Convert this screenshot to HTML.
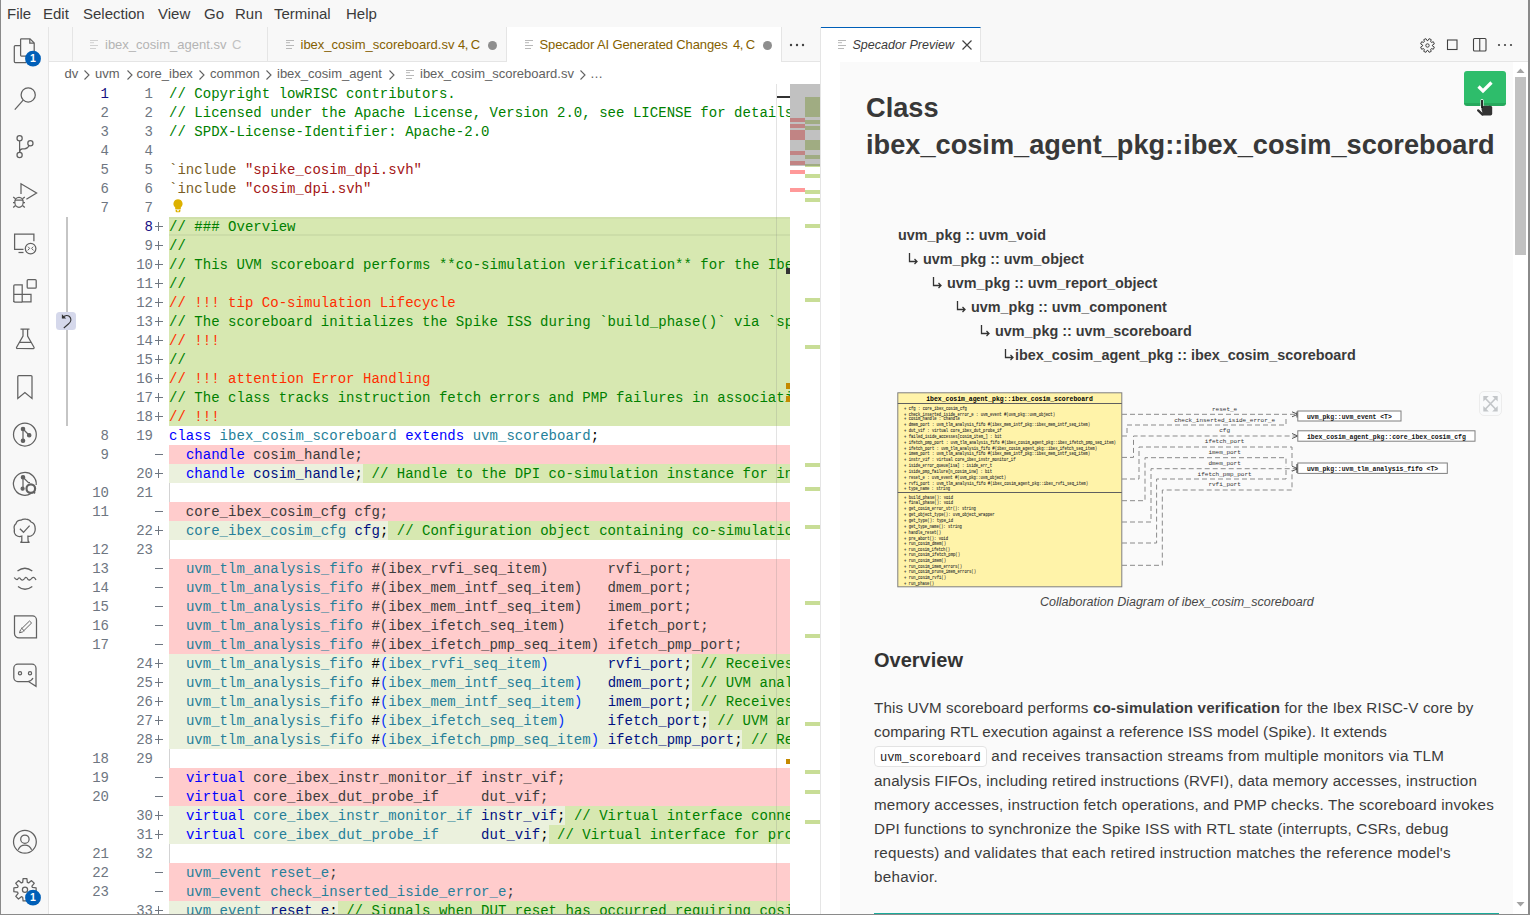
<!DOCTYPE html><html><head><meta charset="utf-8"><title>VS Code</title><style>
*{margin:0;padding:0;box-sizing:border-box}
html,body{width:1530px;height:915px;overflow:hidden;background:#f8f8f8;font-family:"Liberation Sans",sans-serif;position:relative}
.a{position:absolute}
#menubar span{position:absolute;top:5px;font-size:15px;color:#3b3b3b;line-height:18px}
.row{position:absolute;left:169px;width:621px;height:19px;padding-top:1px;font-family:"Liberation Mono",monospace;font-size:14px;line-height:19px;white-space:pre;color:#000;overflow:hidden;letter-spacing:0.033px}
.ln{position:absolute;height:19px;padding-top:1px;font-family:"Liberation Mono",monospace;font-size:14px;line-height:19px;color:#6e7681;text-align:right;white-space:pre}
.c{color:#008000}.r{color:#ff2d00}.k{color:#0000ff}.t{color:#267f99}.v{color:#001080}.s{color:#a31515}.f{color:#795e26}.g{color:#3b3b3b}.b{color:#000}.p{color:#0431fa}
.ins{background:#ebf1dd}.del{background:#ffcccc}.I{background:#d7e8b1}
.tt{font-size:13px;line-height:16px;white-space:nowrap}
.h1{font-weight:bold;font-size:27.2px;line-height:36px;color:#383838;white-space:nowrap}
.inh{font-weight:bold;font-size:14.4px;line-height:20px;color:#3a3a3a;white-space:nowrap}
.cap{font-style:italic;font-size:13px;line-height:18px;color:#474747;white-space:nowrap}
.h2{font-weight:bold;font-size:20px;line-height:28px;color:#333;white-space:nowrap}
.para{font-size:15.2px;line-height:24px;color:#3c3c3c;white-space:nowrap}
.para b{font-weight:bold}
.code{letter-spacing:0;font-family:"Liberation Mono",monospace;font-size:12px;border:1px solid #e3e3e3;border-radius:4px;background:#fff;padding:4px 5px 1px 5px;color:#1a1a1a}
.badge{font-family:'Liberation Sans',sans-serif;font-size:10.5px;font-weight:bold}
.bc{font-size:13px;line-height:16px;white-space:nowrap;color:#616161}
</style></head><body>
<div id="menubar" class="a" style="left:0;top:0;width:1530px;height:27px;background:#f8f8f8">
<span style="left:7px">File</span>
<span style="left:43px">Edit</span>
<span style="left:83px">Selection</span>
<span style="left:158px">View</span>
<span style="left:204px">Go</span>
<span style="left:235px">Run</span>
<span style="left:274px">Terminal</span>
<span style="left:346px">Help</span>
</div>
<div class="a" style="left:0;top:27px;width:48px;height:888px;background:#f8f8f8"></div>
<div class="a" style="left:48px;top:27px;width:1px;height:888px;background:#e5e5e5"></div>
<div class="a" style="left:49px;top:27px;width:771px;height:35px;background:#f8f8f8;border-bottom:1px solid #e5e5e5"></div>
<div class="a" style="left:49px;top:62px;width:771px;height:853px;background:#fff"></div>
<div class="a" style="left:49px;top:27px;width:24px;height:34px;border-right:1px solid #e5e5e5"></div>
<div class="a" style="left:73px;top:27px;width:195px;height:34px;border-right:1px solid #e5e5e5"></div>
<svg class="a" style="left:90px;top:39px" width="10" height="11"><g stroke="#d0d0d0" stroke-width="1"><line x1="0" y1="1.5" x2="8" y2="1.5"/><line x1="0" y1="3.7" x2="4" y2="3.7"/><line x1="0" y1="6.5" x2="8" y2="6.5"/><line x1="0" y1="9.5" x2="6" y2="9.5"/></g></svg>
<div class="a tt" style="left:105px;top:37px;color:#b4b4b4">ibex_cosim_agent.sv</div>
<div class="a tt" style="left:232px;top:37px;color:#c2c2c2">C</div>
<div class="a" style="left:268px;top:27px;width:239px;height:34px;border-right:1px solid #e5e5e5"></div>
<svg class="a" style="left:286px;top:39px" width="10" height="11"><g stroke="#b8b8b8" stroke-width="1"><line x1="0" y1="1.5" x2="8" y2="1.5"/><line x1="0" y1="3.7" x2="4" y2="3.7"/><line x1="0" y1="6.5" x2="8" y2="6.5"/><line x1="0" y1="9.5" x2="6" y2="9.5"/></g></svg>
<div class="a tt" style="left:300.5px;top:37px;color:#855f00">ibex_cosim_scoreboard.sv</div>
<div class="a tt" style="left:458px;top:37px;color:#855f00;letter-spacing:-0.6px">4, C</div>
<div class="a" style="left:487.5px;top:41px;width:9px;height:9px;border-radius:50%;background:#8e8e8e"></div>
<div class="a" style="left:507px;top:27px;width:275px;height:35px;background:#fff;border-right:1px solid #e5e5e5"></div>
<svg class="a" style="left:524.5px;top:39px" width="10" height="11"><g stroke="#b8b8b8" stroke-width="1"><line x1="0" y1="1.5" x2="8" y2="1.5"/><line x1="0" y1="3.7" x2="4" y2="3.7"/><line x1="0" y1="6.5" x2="8" y2="6.5"/><line x1="0" y1="9.5" x2="6" y2="9.5"/></g></svg>
<div class="a tt" style="left:539.5px;top:37px;color:#855f00;letter-spacing:-0.12px">Specador AI Generated Changes</div>
<div class="a tt" style="left:733px;top:37px;color:#855f00;letter-spacing:-0.6px">4, C</div>
<div class="a" style="left:762.5px;top:41px;width:9px;height:9px;border-radius:50%;background:#8e8e8e"></div>
<svg class="a" style="left:788px;top:41px" width="18" height="8"><g fill="#424242"><circle cx="3" cy="4" r="1.2"/><circle cx="9" cy="4" r="1.2"/><circle cx="15" cy="4" r="1.2"/></g></svg>
<div class="a bc" style="left:64.5px;top:66px">dv</div>
<div class="a bc" style="left:95px;top:66px">uvm</div>
<div class="a bc" style="left:136.5px;top:66px">core_ibex</div>
<div class="a bc" style="left:210px;top:66px">common</div>
<div class="a bc" style="left:277px;top:66px">ibex_cosim_agent</div>
<div class="a bc" style="left:420px;top:66px">ibex_cosim_scoreboard.sv</div>
<div class="a bc" style="left:590px;top:66px">…</div>
<svg class="a" style="left:83px;top:68px" width="8" height="14"><path d="M1.5 2.5 L6 7 L1.5 11.5" stroke="#616161" stroke-width="1.1" fill="none"/></svg>
<svg class="a" style="left:125.7px;top:68px" width="8" height="14"><path d="M1.5 2.5 L6 7 L1.5 11.5" stroke="#616161" stroke-width="1.1" fill="none"/></svg>
<svg class="a" style="left:198px;top:68px" width="8" height="14"><path d="M1.5 2.5 L6 7 L1.5 11.5" stroke="#616161" stroke-width="1.1" fill="none"/></svg>
<svg class="a" style="left:265px;top:68px" width="8" height="14"><path d="M1.5 2.5 L6 7 L1.5 11.5" stroke="#616161" stroke-width="1.1" fill="none"/></svg>
<svg class="a" style="left:387.6px;top:68px" width="8" height="14"><path d="M1.5 2.5 L6 7 L1.5 11.5" stroke="#616161" stroke-width="1.1" fill="none"/></svg>
<svg class="a" style="left:578.6px;top:68px" width="8" height="14"><path d="M1.5 2.5 L6 7 L1.5 11.5" stroke="#616161" stroke-width="1.1" fill="none"/></svg>
<svg class="a" style="left:405.5px;top:69px" width="10" height="11"><g stroke="#b8b8b8" stroke-width="1"><line x1="0" y1="1.5" x2="8" y2="1.5"/><line x1="0" y1="3.7" x2="4" y2="3.7"/><line x1="0" y1="6.5" x2="8" y2="6.5"/><line x1="0" y1="9.5" x2="6" y2="9.5"/></g></svg>
<svg class="a" style="left:0;top:0" width="48" height="915"><g fill="none" stroke="#616161" stroke-width="1.25"><path d="M26 45.6 H15.3 a1 1 0 0 0 -1 1 V61.5 a1 1 0 0 0 1 1 H26" />
<path d="M20.6 45.6 V39.6 a0.8 0.8 0 0 1 0.8 -0.8 H30 L34.2 43 V55.2 a0.8 0.8 0 0 1 -0.8 0.8 H21.4 a0.8 0.8 0 0 1 -0.8 -0.8 Z" fill="#f8f8f8"/>
<path d="M29.8 39 V43.2 H34" />
<circle cx="28.2" cy="94.9" r="7.1"/>
<line x1="23.2" y1="100.2" x2="14.8" y2="109.6"/>
<circle cx="19.6" cy="138.3" r="2.6"/><circle cx="19.6" cy="155" r="2.6"/><circle cx="30.4" cy="143.2" r="2.6"/>
<line x1="19.6" y1="140.9" x2="19.6" y2="152.4"/>
<path d="M29.2 145.5 Q27.5 148.8 24.5 148.8 H22.5 Q19.6 149 19.6 152"/>
<path d="M21 194 V183.8 L36.6 193 L26.4 199.3"/>
<ellipse cx="19" cy="202.3" rx="4.2" ry="5"/>
<path d="M14.8 200 H23.2 M13.2 197 L15.5 198.8 M24.8 197 L22.5 198.8 M13 202.5 H15 M23 202.5 H25 M13.2 207.5 L15.5 205.5 M24.8 207.5 L22.5 205.5"/>
<path d="M33.9 241.3 V234.2 H14.6 V249.3 H23.5"/>
<line x1="18.5" y1="252.5" x2="23.5" y2="252.5"/>
<circle cx="30.6" cy="248.6" r="5.3"/>
<path d="M28 246.7 L29.6 248.3 L27.8 250.4 M33.2 246.7 L31.6 248.3 L33.4 250.4" stroke-width="1"/>
<path d="M13.8 302 V285.8 a1 1 0 0 1 1 -1 H22.2 V301.9 H31 V294.4 H13.8"/>
<path d="M22.2 302 H14.8 a1 1 0 0 1 -1 -1" />
<rect x="27.2" y="279.6" width="9" height="8.6" rx="1"/>
<path d="M20.5 329.2 H29.5 M23 329.5 V336 L16.6 347.3 a0.8 0.8 0 0 0 0.7 1.2 H33.3 a0.8 0.8 0 0 0 0.7 -1.2 L27.6 336 V329.5 M19.6 342.3 H31"/>
<path d="M17.8 398.5 V376.5 a1 1 0 0 1 1 -1 H31 a1 1 0 0 1 1 1 V398.5 L24.9 392.6 Z"/>
<circle cx="24.9" cy="434.6" r="11.4"/>
<circle cx="23" cy="429" r="1.7" fill="#616161"/><circle cx="23" cy="440.8" r="1.7" fill="#616161"/><circle cx="29.2" cy="435.2" r="1.7" fill="#616161"/>
<path d="M23 429 V440.8 M23 429 L29.2 435.2"/>
<path d="M31 493.5 A11.4 11.4 0 1 1 36.2 485"/>
<circle cx="23" cy="477.3" r="1.7" fill="#616161"/><circle cx="22.6" cy="488.7" r="1.5" fill="#616161"/>
<path d="M23 477.3 V488 M23 477.3 L28.5 482.6 H30"/>
<circle cx="30.8" cy="488.6" r="4.3" stroke-width="2.2"/>
<line x1="33.4" y1="491.6" x2="35" y2="493.3" stroke-width="1.8"/>
<path d="M21.8 536.2 Q18.5 537.2 16 535.2 Q13.6 533 14.4 529.5 Q13.3 526 15.9 523.8 Q16.9 520.2 21 520.2 Q23 518.6 26 519.2 Q29.5 519.4 31 522 Q34.7 523.2 35 527 Q36 531.5 33 534.6 Q30.5 536.9 27.9 536.2 L28.1 541 Q28.4 542.2 29.6 542.3 H20.3 Q21.5 542.2 21.8 541 Z"/>
<path d="M19.9 528.8 L23.5 532.3 L29.6 525.6" />
<path d="M17.5 571 Q24.9 565.5 32.3 571"/>
<path d="M14.2 577.5 Q16 580 17.5 579.5 Q19.2 576 21 579.5 Q22.8 581 24.6 578.5 Q26.3 576 28 579.5 Q30 581 32 578 Q34 576 36 580" />
<path d="M18 586.5 Q24.9 592 32.3 586.5"/>
<path d="M14.5 615.9 H32.5 a4 4 0 0 1 4 4 V637.9 H19 a4.5 4.5 0 0 1 -4.5 -4.5 Z"/>
<path d="M20.5 629.8 L29.5 621 L31.6 623 L22.6 631.9 M20.5 629.8 L19.5 632.8 L22.6 631.9 M21.2 627.8 L24.3 630.9" stroke-width="1"/>
<path d="M17.8 664.2 H32 a4 4 0 0 1 4 4 V686.3 L28.5 681.5 H17.8 a4 4 0 0 1 -4 -4 V668.2 a4 4 0 0 1 4 -4 Z"/>
<path d="M28 681.5 Q31.5 681 33 678"/>
<circle cx="20" cy="673.3" r="1.6"/><circle cx="30" cy="673.3" r="1.6"/>
<circle cx="24.9" cy="841.8" r="11.4"/>
<circle cx="24.9" cy="839.2" r="4.2"/>
<path d="M18.2 849.8 Q20 845 24.9 845 Q29.8 845 31.6 849.8"/>
<path d="M32.45 887.49 L36.14 887.89 L36.14 891.71 L32.45 892.11 L31.90 893.44 L34.23 896.32 L31.52 899.03 L28.64 896.70 L27.31 897.25 L26.91 900.94 L23.09 900.94 L22.69 897.25 L21.36 896.70 L18.48 899.03 L15.77 896.32 L18.10 893.44 L17.55 892.11 L13.86 891.71 L13.86 887.89 L17.55 887.49 L18.10 886.16 L15.77 883.28 L18.48 880.57 L21.36 882.90 L22.69 882.35 L23.09 878.66 L26.91 878.66 L27.31 882.35 L28.64 882.90 L31.52 880.57 L34.23 883.28 L31.90 886.16 Z" stroke-linejoin="round"/>
<circle cx="25" cy="889.8" r="2.6"/></g><circle cx="33" cy="58.7" r="7.9" fill="#005fb8"/><text x="33" y="62.3" class="badge" fill="#fff" text-anchor="middle">1</text><circle cx="33" cy="897.7" r="7.9" fill="#005fb8"/><text x="33" y="901.3" class="badge" fill="#fff" text-anchor="middle">1</text></svg>
<div class="row " style="top:84px"><span class="c">// Copyright lowRISC contributors.</span></div>
<div class="ln" style="left:61px;width:48px;top:84px;color:#171184">1</div>
<div class="ln" style="left:101px;width:52px;top:84px;color:#6e7681">1</div>
<div class="row " style="top:103px"><span class="c">// Licensed under the Apache License, Version 2.0, see LICENSE for details.</span></div>
<div class="ln" style="left:61px;width:48px;top:103px;color:#6e7681">2</div>
<div class="ln" style="left:101px;width:52px;top:103px;color:#6e7681">2</div>
<div class="row " style="top:122px"><span class="c">// SPDX-License-Identifier: Apache-2.0</span></div>
<div class="ln" style="left:61px;width:48px;top:122px;color:#6e7681">3</div>
<div class="ln" style="left:101px;width:52px;top:122px;color:#6e7681">3</div>
<div class="row " style="top:141px"></div>
<div class="ln" style="left:61px;width:48px;top:141px;color:#6e7681">4</div>
<div class="ln" style="left:101px;width:52px;top:141px;color:#6e7681">4</div>
<div class="row " style="top:160px"><span class="f">`include</span><span class="b"> </span><span class="s">&quot;spike_cosim_dpi.svh&quot;</span></div>
<div class="ln" style="left:61px;width:48px;top:160px;color:#6e7681">5</div>
<div class="ln" style="left:101px;width:52px;top:160px;color:#6e7681">5</div>
<div class="row " style="top:179px"><span class="f">`include</span><span class="b"> </span><span class="s">&quot;cosim_dpi.svh&quot;</span></div>
<div class="ln" style="left:61px;width:48px;top:179px;color:#6e7681">6</div>
<div class="ln" style="left:101px;width:52px;top:179px;color:#6e7681">6</div>
<div class="row " style="top:198px"></div>
<div class="ln" style="left:61px;width:48px;top:198px;color:#6e7681">7</div>
<div class="ln" style="left:101px;width:52px;top:198px;color:#6e7681">7</div>
<div class="row I" style="top:217px"><span class="c">// ### Overview</span></div>
<div class="ln" style="left:101px;width:52px;top:217px;color:#171184">8</div>
<div class="a" style="left:154.5px;top:225.5px;width:8.5px;height:1px;background:#6e7681"></div><div class="a" style="left:158.25px;top:221.5px;width:1px;height:9px;background:#6e7681"></div>
<div class="row I" style="top:236px"><span class="c">//</span></div>
<div class="ln" style="left:101px;width:52px;top:236px;color:#6e7681">9</div>
<div class="a" style="left:154.5px;top:244.5px;width:8.5px;height:1px;background:#6e7681"></div><div class="a" style="left:158.25px;top:240.5px;width:1px;height:9px;background:#6e7681"></div>
<div class="row I" style="top:255px"><span class="c">// This UVM scoreboard performs **co-simulation verification** for the Ibex RISC-V core</span></div>
<div class="ln" style="left:101px;width:52px;top:255px;color:#6e7681">10</div>
<div class="a" style="left:154.5px;top:263.5px;width:8.5px;height:1px;background:#6e7681"></div><div class="a" style="left:158.25px;top:259.5px;width:1px;height:9px;background:#6e7681"></div>
<div class="row I" style="top:274px"><span class="c">//</span></div>
<div class="ln" style="left:101px;width:52px;top:274px;color:#6e7681">11</div>
<div class="a" style="left:154.5px;top:282.5px;width:8.5px;height:1px;background:#6e7681"></div><div class="a" style="left:158.25px;top:278.5px;width:1px;height:9px;background:#6e7681"></div>
<div class="row I" style="top:293px"><span class="r">// !!! tip Co-simulation Lifecycle</span></div>
<div class="ln" style="left:101px;width:52px;top:293px;color:#6e7681">12</div>
<div class="a" style="left:154.5px;top:301.5px;width:8.5px;height:1px;background:#6e7681"></div><div class="a" style="left:158.25px;top:297.5px;width:1px;height:9px;background:#6e7681"></div>
<div class="row I" style="top:312px"><span class="c">// The scoreboard initializes the Spike ISS during `build_phase()` via `spike_cosim_init`</span></div>
<div class="ln" style="left:101px;width:52px;top:312px;color:#6e7681">13</div>
<div class="a" style="left:154.5px;top:320.5px;width:8.5px;height:1px;background:#6e7681"></div><div class="a" style="left:158.25px;top:316.5px;width:1px;height:9px;background:#6e7681"></div>
<div class="row I" style="top:331px"><span class="r">// !!!</span></div>
<div class="ln" style="left:101px;width:52px;top:331px;color:#6e7681">14</div>
<div class="a" style="left:154.5px;top:339.5px;width:8.5px;height:1px;background:#6e7681"></div><div class="a" style="left:158.25px;top:335.5px;width:1px;height:9px;background:#6e7681"></div>
<div class="row I" style="top:350px"><span class="c">//</span></div>
<div class="ln" style="left:101px;width:52px;top:350px;color:#6e7681">15</div>
<div class="a" style="left:154.5px;top:358.5px;width:8.5px;height:1px;background:#6e7681"></div><div class="a" style="left:158.25px;top:354.5px;width:1px;height:9px;background:#6e7681"></div>
<div class="row I" style="top:369px"><span class="r">// !!! attention Error Handling</span></div>
<div class="ln" style="left:101px;width:52px;top:369px;color:#6e7681">16</div>
<div class="a" style="left:154.5px;top:377.5px;width:8.5px;height:1px;background:#6e7681"></div><div class="a" style="left:158.25px;top:373.5px;width:1px;height:9px;background:#6e7681"></div>
<div class="row I" style="top:388px"><span class="c">// The class tracks instruction fetch errors and PMP failures in associative arrays</span></div>
<div class="ln" style="left:101px;width:52px;top:388px;color:#6e7681">17</div>
<div class="a" style="left:154.5px;top:396.5px;width:8.5px;height:1px;background:#6e7681"></div><div class="a" style="left:158.25px;top:392.5px;width:1px;height:9px;background:#6e7681"></div>
<div class="row I" style="top:407px"><span class="r">// !!!</span></div>
<div class="ln" style="left:101px;width:52px;top:407px;color:#6e7681">18</div>
<div class="a" style="left:154.5px;top:415.5px;width:8.5px;height:1px;background:#6e7681"></div><div class="a" style="left:158.25px;top:411.5px;width:1px;height:9px;background:#6e7681"></div>
<div class="row " style="top:426px"><span class="k">class</span><span class="b"> </span><span class="t">ibex_cosim_scoreboard</span><span class="b"> </span><span class="k">extends</span><span class="b"> </span><span class="t">uvm_scoreboard</span><span class="b">;</span></div>
<div class="ln" style="left:61px;width:48px;top:426px;color:#6e7681">8</div>
<div class="ln" style="left:101px;width:52px;top:426px;color:#6e7681">19</div>
<div class="row del" style="top:445px"><span class="b">  </span><span class="k">chandle</span><span class="g"> cosim_handle;</span></div>
<div class="ln" style="left:61px;width:48px;top:445px;color:#6e7681">9</div>
<div class="a" style="left:154.5px;top:453.5px;width:8.5px;height:1px;background:#6e7681"></div>
<div class="a ins" style="left:169px;top:464px;width:621px;height:19px"></div>
<div class="a I" style="left:363.0px;top:464px;width:427.0px;height:19px"></div>
<div class="row" style="top:464px"><span class="b">  </span><span class="k">chandle</span><span class="b"> </span><span class="v">cosim_handle</span><span class="b">;</span><span class="c"> // Handle to the DPI co-simulation instance for interacting</span></div>
<div class="ln" style="left:101px;width:52px;top:464px;color:#6e7681">20</div>
<div class="a" style="left:154.5px;top:472.5px;width:8.5px;height:1px;background:#6e7681"></div><div class="a" style="left:158.25px;top:468.5px;width:1px;height:9px;background:#6e7681"></div>
<div class="row " style="top:483px"></div>
<div class="ln" style="left:61px;width:48px;top:483px;color:#6e7681">10</div>
<div class="ln" style="left:101px;width:52px;top:483px;color:#6e7681">21</div>
<div class="row del" style="top:502px"><span class="g">  core_ibex_cosim_cfg cfg;</span></div>
<div class="ln" style="left:61px;width:48px;top:502px;color:#6e7681">11</div>
<div class="a" style="left:154.5px;top:510.5px;width:8.5px;height:1px;background:#6e7681"></div>
<div class="a ins" style="left:169px;top:521px;width:621px;height:19px"></div>
<div class="a I" style="left:388.3px;top:521px;width:401.7px;height:19px"></div>
<div class="row" style="top:521px"><span class="b">  </span><span class="t">core_ibex_cosim_cfg</span><span class="b"> </span><span class="v">cfg</span><span class="b">;</span><span class="c"> // Configuration object containing co-simulation settings</span></div>
<div class="ln" style="left:101px;width:52px;top:521px;color:#6e7681">22</div>
<div class="a" style="left:154.5px;top:529.5px;width:8.5px;height:1px;background:#6e7681"></div><div class="a" style="left:158.25px;top:525.5px;width:1px;height:9px;background:#6e7681"></div>
<div class="row " style="top:540px"></div>
<div class="ln" style="left:61px;width:48px;top:540px;color:#6e7681">12</div>
<div class="ln" style="left:101px;width:52px;top:540px;color:#6e7681">23</div>
<div class="row del" style="top:559px"><span class="b">  </span><span class="t">uvm_tlm_analysis_fifo</span><span class="g"> #(ibex_rvfi_seq_item)       rvfi_port;</span></div>
<div class="ln" style="left:61px;width:48px;top:559px;color:#6e7681">13</div>
<div class="a" style="left:154.5px;top:567.5px;width:8.5px;height:1px;background:#6e7681"></div>
<div class="row del" style="top:578px"><span class="b">  </span><span class="t">uvm_tlm_analysis_fifo</span><span class="g"> #(ibex_mem_intf_seq_item)   dmem_port;</span></div>
<div class="ln" style="left:61px;width:48px;top:578px;color:#6e7681">14</div>
<div class="a" style="left:154.5px;top:586.5px;width:8.5px;height:1px;background:#6e7681"></div>
<div class="row del" style="top:597px"><span class="b">  </span><span class="t">uvm_tlm_analysis_fifo</span><span class="g"> #(ibex_mem_intf_seq_item)   imem_port;</span></div>
<div class="ln" style="left:61px;width:48px;top:597px;color:#6e7681">15</div>
<div class="a" style="left:154.5px;top:605.5px;width:8.5px;height:1px;background:#6e7681"></div>
<div class="row del" style="top:616px"><span class="b">  </span><span class="t">uvm_tlm_analysis_fifo</span><span class="g"> #(ibex_ifetch_seq_item)     ifetch_port;</span></div>
<div class="ln" style="left:61px;width:48px;top:616px;color:#6e7681">16</div>
<div class="a" style="left:154.5px;top:624.5px;width:8.5px;height:1px;background:#6e7681"></div>
<div class="row del" style="top:635px"><span class="b">  </span><span class="t">uvm_tlm_analysis_fifo</span><span class="g"> #(ibex_ifetch_pmp_seq_item) ifetch_pmp_port;</span></div>
<div class="ln" style="left:61px;width:48px;top:635px;color:#6e7681">17</div>
<div class="a" style="left:154.5px;top:643.5px;width:8.5px;height:1px;background:#6e7681"></div>
<div class="a ins" style="left:169px;top:654px;width:621px;height:19px"></div>
<div class="a I" style="left:691.8px;top:654px;width:98.2px;height:19px"></div>
<div class="row" style="top:654px"><span class="b">  </span><span class="t">uvm_tlm_analysis_fifo</span><span class="b"> #</span><span class="p">(</span><span class="t">ibex_rvfi_seq_item</span><span class="p">)</span><span class="b">       </span><span class="v">rvfi_port</span><span class="b">;</span><span class="c"> // Receives RVFI transactions</span></div>
<div class="ln" style="left:101px;width:52px;top:654px;color:#6e7681">24</div>
<div class="a" style="left:154.5px;top:662.5px;width:8.5px;height:1px;background:#6e7681"></div><div class="a" style="left:158.25px;top:658.5px;width:1px;height:9px;background:#6e7681"></div>
<div class="a ins" style="left:169px;top:673px;width:621px;height:19px"></div>
<div class="a I" style="left:691.8px;top:673px;width:98.2px;height:19px"></div>
<div class="row" style="top:673px"><span class="b">  </span><span class="t">uvm_tlm_analysis_fifo</span><span class="b"> #</span><span class="p">(</span><span class="t">ibex_mem_intf_seq_item</span><span class="p">)</span><span class="b">   </span><span class="v">dmem_port</span><span class="b">;</span><span class="c"> // UVM analysis FIFO</span></div>
<div class="ln" style="left:101px;width:52px;top:673px;color:#6e7681">25</div>
<div class="a" style="left:154.5px;top:681.5px;width:8.5px;height:1px;background:#6e7681"></div><div class="a" style="left:158.25px;top:677.5px;width:1px;height:9px;background:#6e7681"></div>
<div class="a ins" style="left:169px;top:692px;width:621px;height:19px"></div>
<div class="a I" style="left:691.8px;top:692px;width:98.2px;height:19px"></div>
<div class="row" style="top:692px"><span class="b">  </span><span class="t">uvm_tlm_analysis_fifo</span><span class="b"> #</span><span class="p">(</span><span class="t">ibex_mem_intf_seq_item</span><span class="p">)</span><span class="b">   </span><span class="v">imem_port</span><span class="b">;</span><span class="c"> // Receives instruction</span></div>
<div class="ln" style="left:101px;width:52px;top:692px;color:#6e7681">26</div>
<div class="a" style="left:154.5px;top:700.5px;width:8.5px;height:1px;background:#6e7681"></div><div class="a" style="left:158.25px;top:696.5px;width:1px;height:9px;background:#6e7681"></div>
<div class="a ins" style="left:169px;top:711px;width:621px;height:19px"></div>
<div class="a I" style="left:708.7px;top:711px;width:81.3px;height:19px"></div>
<div class="row" style="top:711px"><span class="b">  </span><span class="t">uvm_tlm_analysis_fifo</span><span class="b"> #</span><span class="p">(</span><span class="t">ibex_ifetch_seq_item</span><span class="p">)</span><span class="b">     </span><span class="v">ifetch_port</span><span class="b">;</span><span class="c"> // UVM analysis FIFO</span></div>
<div class="ln" style="left:101px;width:52px;top:711px;color:#6e7681">27</div>
<div class="a" style="left:154.5px;top:719.5px;width:8.5px;height:1px;background:#6e7681"></div><div class="a" style="left:158.25px;top:715.5px;width:1px;height:9px;background:#6e7681"></div>
<div class="a ins" style="left:169px;top:730px;width:621px;height:19px"></div>
<div class="a I" style="left:742.4px;top:730px;width:47.6px;height:19px"></div>
<div class="row" style="top:730px"><span class="b">  </span><span class="t">uvm_tlm_analysis_fifo</span><span class="b"> #</span><span class="p">(</span><span class="t">ibex_ifetch_pmp_seq_item</span><span class="p">)</span><span class="b"> </span><span class="v">ifetch_pmp_port</span><span class="b">;</span><span class="c"> // Receives PMP</span></div>
<div class="ln" style="left:101px;width:52px;top:730px;color:#6e7681">28</div>
<div class="a" style="left:154.5px;top:738.5px;width:8.5px;height:1px;background:#6e7681"></div><div class="a" style="left:158.25px;top:734.5px;width:1px;height:9px;background:#6e7681"></div>
<div class="row " style="top:749px"></div>
<div class="ln" style="left:61px;width:48px;top:749px;color:#6e7681">18</div>
<div class="ln" style="left:101px;width:52px;top:749px;color:#6e7681">29</div>
<div class="row del" style="top:768px"><span class="b">  </span><span class="k">virtual</span><span class="g"> core_ibex_instr_monitor_if instr_vif;</span></div>
<div class="ln" style="left:61px;width:48px;top:768px;color:#6e7681">19</div>
<div class="a" style="left:154.5px;top:776.5px;width:8.5px;height:1px;background:#6e7681"></div>
<div class="row del" style="top:787px"><span class="b">  </span><span class="k">virtual</span><span class="g"> core_ibex_dut_probe_if     dut_vif;</span></div>
<div class="ln" style="left:61px;width:48px;top:787px;color:#6e7681">20</div>
<div class="a" style="left:154.5px;top:795.5px;width:8.5px;height:1px;background:#6e7681"></div>
<div class="a ins" style="left:169px;top:806px;width:621px;height:19px"></div>
<div class="a I" style="left:565.4px;top:806px;width:224.6px;height:19px"></div>
<div class="row" style="top:806px"><span class="b">  </span><span class="k">virtual</span><span class="b"> </span><span class="t">core_ibex_instr_monitor_if</span><span class="b"> </span><span class="v">instr_vif</span><span class="b">;</span><span class="c"> // Virtual interface connected to the instruction monitor</span></div>
<div class="ln" style="left:101px;width:52px;top:806px;color:#6e7681">30</div>
<div class="a" style="left:154.5px;top:814.5px;width:8.5px;height:1px;background:#6e7681"></div><div class="a" style="left:158.25px;top:810.5px;width:1px;height:9px;background:#6e7681"></div>
<div class="a ins" style="left:169px;top:825px;width:621px;height:19px"></div>
<div class="a I" style="left:548.5px;top:825px;width:241.5px;height:19px"></div>
<div class="row" style="top:825px"><span class="b">  </span><span class="k">virtual</span><span class="b"> </span><span class="t">core_ibex_dut_probe_if</span><span class="b">     </span><span class="v">dut_vif</span><span class="b">;</span><span class="c"> // Virtual interface for probing DUT</span></div>
<div class="ln" style="left:101px;width:52px;top:825px;color:#6e7681">31</div>
<div class="a" style="left:154.5px;top:833.5px;width:8.5px;height:1px;background:#6e7681"></div><div class="a" style="left:158.25px;top:829.5px;width:1px;height:9px;background:#6e7681"></div>
<div class="row " style="top:844px"></div>
<div class="ln" style="left:61px;width:48px;top:844px;color:#6e7681">21</div>
<div class="ln" style="left:101px;width:52px;top:844px;color:#6e7681">32</div>
<div class="row del" style="top:863px"><span class="b">  </span><span class="t">uvm_event</span><span class="b"> </span><span class="t">reset_e</span><span class="g">;</span></div>
<div class="ln" style="left:61px;width:48px;top:863px;color:#6e7681">22</div>
<div class="a" style="left:154.5px;top:871.5px;width:8.5px;height:1px;background:#6e7681"></div>
<div class="row del" style="top:882px"><span class="b">  </span><span class="t">uvm_event</span><span class="b"> </span><span class="t">check_inserted_iside_error_e</span><span class="g">;</span></div>
<div class="ln" style="left:61px;width:48px;top:882px;color:#6e7681">23</div>
<div class="a" style="left:154.5px;top:890.5px;width:8.5px;height:1px;background:#6e7681"></div>
<div class="a ins" style="left:169px;top:901px;width:621px;height:19px"></div>
<div class="a I" style="left:337.7px;top:901px;width:452.3px;height:19px"></div>
<div class="row" style="top:901px"><span class="b">  </span><span class="t">uvm_event</span><span class="b"> </span><span class="v">reset_e</span><span class="b">;</span><span class="c"> // Signals when DUT reset has occurred requiring cosim reset</span></div>
<div class="ln" style="left:101px;width:52px;top:901px;color:#6e7681">33</div>
<div class="a" style="left:154.5px;top:909.5px;width:8.5px;height:1px;background:#6e7681"></div><div class="a" style="left:158.25px;top:905.5px;width:1px;height:9px;background:#6e7681"></div>
<div class="a" style="left:66px;top:217px;width:2px;height:209px;background:#c5c5c5"></div>
<div class="a" style="left:56px;top:312px;width:20px;height:18px;border-radius:3.5px;background:#d5d8eb"></div>
<svg class="a" style="left:56px;top:312px" width="20" height="18"><path d="M6.6 6 C8.5 3 12.5 2.6 14.2 5.4 C15.6 7.8 14.6 10.2 12.4 12 L7.8 16" fill="none" stroke="#333" stroke-width="1.1"/><path d="M5.9 2.3 V6.6 H10.2 Z" fill="#333"/></svg>
<svg class="a" style="left:171px;top:198px" width="14" height="16"><path d="M7 1.2 a4.6 4.6 0 0 1 2.8 8.2 V11.2 H4.2 V9.4 A4.6 4.6 0 0 1 7 1.2 Z" fill="#ddb100"/><path d="M4.6 11.8 H9.4 V13 a1.2 1.2 0 0 1 -1.2 1.2 H5.8 a1.2 1.2 0 0 1 -1.2 -1.2 Z" fill="#ddb100"/><circle cx="7" cy="12.6" r="0.9" fill="#fff"/></svg>
<div class="a" style="left:169px;top:217px;width:621px;height:19px;border-top:2px solid rgba(0,0,0,0.03);border-bottom:2px solid rgba(0,0,0,0.045)"></div>
<div class="a" style="left:169px;top:483px;width:1px;height:19px;background:#d3d3d3"></div>
<div class="a" style="left:169px;top:540px;width:1px;height:19px;background:#d3d3d3"></div>
<div class="a" style="left:169px;top:749px;width:1px;height:19px;background:#d3d3d3"></div>
<div class="a" style="left:169px;top:844px;width:1px;height:19px;background:#d3d3d3"></div>
<div class="a" style="left:776px;top:84px;width:1px;height:831px;background:rgba(127,127,127,0.22)"></div>
<div class="a" style="left:777px;top:96px;width:13px;height:2px;background:#333"></div>
<div class="a" style="left:786px;top:267.5px;width:4px;height:6px;background:#333"></div>
<div class="a" style="left:786px;top:383px;width:4px;height:6px;background:#c48a00"></div>
<div class="a" style="left:786px;top:396px;width:4px;height:6px;background:#c48a00"></div>
<div class="a" style="left:786px;top:759px;width:4px;height:5px;background:#c48a00"></div>
<div class="a" style="left:790px;top:84px;width:30px;height:831px;background:#fff"></div>
<div class="a" style="left:790px;top:118px;width:15px;height:4px;background:#ff9999"></div>
<div class="a" style="left:790px;top:124px;width:15px;height:4px;background:#ff9999"></div>
<div class="a" style="left:790px;top:130px;width:15px;height:10px;background:#ff9999"></div>
<div class="a" style="left:790px;top:151px;width:15px;height:4px;background:#ff9999"></div>
<div class="a" style="left:790px;top:161px;width:15px;height:4px;background:#ff9999"></div>
<div class="a" style="left:790px;top:170px;width:15px;height:4px;background:#ff9999"></div>
<div class="a" style="left:790px;top:188px;width:15px;height:4px;background:#ff9999"></div>
<div class="a" style="left:805px;top:97px;width:15px;height:20px;background:#c8dd96"></div>
<div class="a" style="left:805px;top:120px;width:15px;height:4px;background:#c8dd96"></div>
<div class="a" style="left:805px;top:126px;width:15px;height:4px;background:#c8dd96"></div>
<div class="a" style="left:805px;top:140px;width:15px;height:10px;background:#c8dd96"></div>
<div class="a" style="left:805px;top:155px;width:15px;height:4px;background:#c8dd96"></div>
<div class="a" style="left:805px;top:164px;width:15px;height:3px;background:#c8dd96"></div>
<div class="a" style="left:805px;top:174px;width:15px;height:4px;background:#c8dd96"></div>
<div class="a" style="left:805px;top:190px;width:15px;height:4px;background:#c8dd96"></div>
<div class="a" style="left:805px;top:198px;width:15px;height:4px;background:#c8dd96"></div>
<div class="a" style="left:805px;top:224px;width:15px;height:4px;background:#c8dd96"></div>
<div class="a" style="left:805px;top:298px;width:15px;height:4px;background:#c8dd96"></div>
<div class="a" style="left:805px;top:345px;width:15px;height:4px;background:#c8dd96"></div>
<div class="a" style="left:805px;top:463px;width:15px;height:4px;background:#c8dd96"></div>
<div class="a" style="left:805px;top:487px;width:15px;height:4px;background:#c8dd96"></div>
<div class="a" style="left:805px;top:525px;width:15px;height:4px;background:#c8dd96"></div>
<div class="a" style="left:805px;top:601px;width:15px;height:4px;background:#c8dd96"></div>
<div class="a" style="left:805px;top:634px;width:15px;height:4px;background:#c8dd96"></div>
<div class="a" style="left:805px;top:722px;width:15px;height:4px;background:#c8dd96"></div>
<div class="a" style="left:805px;top:770px;width:15px;height:4px;background:#c8dd96"></div>
<div class="a" style="left:805px;top:790px;width:15px;height:4px;background:#c8dd96"></div>
<div class="a" style="left:805px;top:820px;width:15px;height:4px;background:#c8dd96"></div>
<div class="a" style="left:790px;top:84px;width:30px;height:82px;background:rgba(100,100,100,0.4)"></div>
<div class="a" style="left:820px;top:27px;width:1px;height:888px;background:#e5e5e5"></div>
<div class="a" style="left:821px;top:27px;width:707px;height:35px;background:#f8f8f8;border-bottom:1px solid #e5e5e5"></div>
<div class="a" style="left:821px;top:27px;width:160px;height:35px;background:#fff;border-right:1px solid #e5e5e5;border-top:1px solid #005fb8"></div>
<svg class="a" style="left:838px;top:39px" width="10" height="11"><g stroke="#b8b8b8" stroke-width="1"><line x1="0" y1="1.5" x2="8" y2="1.5"/><line x1="0" y1="3.7" x2="4" y2="3.7"/><line x1="0" y1="6.5" x2="8" y2="6.5"/><line x1="0" y1="9.5" x2="6" y2="9.5"/></g></svg>
<div class="a tt" style="left:852.5px;top:37px;color:#3b3b3b;font-style:italic;font-size:12.5px">Specador Preview</div>
<svg class="a" style="left:961px;top:39px" width="12" height="12"><path d="M1.5 1.5 L10.5 10.5 M10.5 1.5 L1.5 10.5" stroke="#424242" stroke-width="1.2"/></svg>
<svg class="a" style="left:1418.5px;top:36.5px" width="17" height="17"><path d="M13.38 8.95 L15.33 10.05 L14.42 12.23 L12.27 11.63 L11.63 12.27 L12.23 14.42 L10.05 15.33 L8.95 13.38 L8.05 13.38 L6.95 15.33 L4.77 14.42 L5.37 12.27 L4.73 11.63 L2.58 12.23 L1.67 10.05 L3.62 8.95 L3.62 8.05 L1.67 6.95 L2.58 4.77 L4.73 5.37 L5.37 4.73 L4.77 2.58 L6.95 1.67 L8.05 3.62 L8.95 3.62 L10.05 1.67 L12.23 2.58 L11.63 4.73 L12.27 5.37 L14.42 4.77 L15.33 6.95 L13.38 8.05 Z" fill="none" stroke="#424242" stroke-width="1" stroke-linejoin="round"/><circle cx="8.5" cy="8.5" r="1.7" fill="none" stroke="#424242" stroke-width="1"/></svg>
<svg class="a" style="left:1446px;top:38px" width="14" height="14"><rect x="1.5" y="2" width="9.5" height="9.5" fill="none" stroke="#424242" stroke-width="1.1"/></svg>
<svg class="a" style="left:1472px;top:37px" width="16" height="16"><rect x="1.5" y="1.5" width="12.5" height="12.5" rx="1" fill="none" stroke="#424242" stroke-width="1.1"/><line x1="7.75" y1="1.5" x2="7.75" y2="14" stroke="#424242" stroke-width="1.1"/></svg>
<svg class="a" style="left:1496px;top:41px" width="18" height="8"><g fill="#424242"><circle cx="3" cy="4" r="1.1"/><circle cx="9" cy="4" r="1.1"/><circle cx="15" cy="4" r="1.1"/></g></svg>
<div class="a" style="left:821px;top:62px;width:707px;height:853px;background:#fff"></div>
<div class="a" style="left:840px;top:62px;width:673px;height:853px;background:#fafafa"></div>
<svg class="a" style="left:1513px;top:62px" width="15" height="853"><path d="M3.5 11 L7.5 6.5 L11.5 11 Z" fill="#a3a3a3"/><path d="M3.5 840 L7.5 844.5 L11.5 840 Z" fill="#a3a3a3"/></svg>
<div class="a" style="left:1515px;top:77px;width:11px;height:178px;background:#c1c1c1"></div>
<div class="a" style="left:1528px;top:0;width:2px;height:915px;background:#8a8a8a"></div>
<div class="a" style="left:1464px;top:71px;width:42px;height:35px;border-radius:3px;background:#2ebd6b;border-bottom:3px solid #26a85c"></div>
<svg class="a" style="left:1464px;top:71px" width="42" height="35"><path d="M14.5 15.5 L19 20 L27.5 11.5" fill="none" stroke="#fff" stroke-width="3.2"/></svg>
<svg class="a" style="left:1474px;top:97px" width="22" height="22"><path d="M7 3.6 Q7 2.6 8 2.6 Q9 2.6 9 3.6 V9.4 H11.2 Q11.8 9 12.6 9.4 H13.8 Q14.5 9 15.4 9.6 Q17.8 9.7 17.8 11.6 V16.6 Q17.8 18.4 16 18.4 H9.2 L4.2 14.2 Q3.4 13.2 4.6 12.6 L7 14.2 Z" fill="#333" stroke="#fff" stroke-width="1.1" stroke-linejoin="round"/><path d="M4.2 13.4 L8.6 17.6" stroke="#fff" stroke-width="4.4" stroke-linecap="round"/><path d="M4.2 13.4 L8.6 17.6" stroke="#333" stroke-width="2.4" stroke-linecap="round"/><rect x="8.2" y="8.8" width="10" height="9.8" rx="1.8" fill="#333"/><rect x="7.2" y="3" width="1.6" height="8" fill="#111"/></svg>
<div class="a h1" style="left:866px;top:90px">Class</div>
<div class="a h1" style="left:866px;top:127px">ibex_cosim_agent_pkg::ibex_cosim_scoreboard</div>
<div class="a inh" style="left:898px;top:225px">uvm_pkg :: uvm_void</div>
<svg class="a" style="left:907px;top:252px" width="12" height="14"><path d="M2.5 1 V9.5 H10 M7.5 7 L10 9.5 L7.5 12" fill="none" stroke="#333" stroke-width="1.3"/></svg>
<div class="a inh" style="left:923px;top:249px">uvm_pkg :: uvm_object</div>
<svg class="a" style="left:931px;top:276px" width="12" height="14"><path d="M2.5 1 V9.5 H10 M7.5 7 L10 9.5 L7.5 12" fill="none" stroke="#333" stroke-width="1.3"/></svg>
<div class="a inh" style="left:947px;top:273px">uvm_pkg :: uvm_report_object</div>
<svg class="a" style="left:955px;top:300px" width="12" height="14"><path d="M2.5 1 V9.5 H10 M7.5 7 L10 9.5 L7.5 12" fill="none" stroke="#333" stroke-width="1.3"/></svg>
<div class="a inh" style="left:971px;top:297px">uvm_pkg :: uvm_component</div>
<svg class="a" style="left:979px;top:324px" width="12" height="14"><path d="M2.5 1 V9.5 H10 M7.5 7 L10 9.5 L7.5 12" fill="none" stroke="#333" stroke-width="1.3"/></svg>
<div class="a inh" style="left:995px;top:321px">uvm_pkg :: uvm_scoreboard</div>
<svg class="a" style="left:1003px;top:348px" width="12" height="14"><path d="M2.5 1 V9.5 H10 M7.5 7 L10 9.5 L7.5 12" fill="none" stroke="#333" stroke-width="1.3"/></svg>
<div class="a inh" style="left:1015px;top:345px">ibex_cosim_agent_pkg :: ibex_cosim_scoreboard</div>
<svg class="a" style="left:890px;top:380px" width="600" height="220"><rect x="7.7999999999999545" y="12.800000000000011" width="224" height="194" fill="#fff3a9" stroke="#7f7f7f" stroke-width="1"/><line x1="7.7999999999999545" y1="23.5" x2="231.79999999999995" y2="23.5" stroke="#5f5f5f" stroke-width="1"/><line x1="7.7999999999999545" y1="112.5" x2="231.79999999999995" y2="112.5" stroke="#5f5f5f" stroke-width="1"/><text x="119.5" y="20.600000000000023" font-family="Liberation Mono" font-weight="bold" font-size="6.6" text-anchor="middle" textLength="166.70000000000005" lengthAdjust="spacingAndGlyphs" fill="#000">ibex_cosim_agent_pkg::ibex_cosim_scoreboard</text><text x="14" y="29.5" font-family="Liberation Mono" font-size="4.8" textLength="62.9" lengthAdjust="spacingAndGlyphs" fill="#333" stroke="#333" stroke-width="0.1">+ cfg : core_ibex_cosim_cfg</text><text x="14" y="35.5" font-family="Liberation Mono" font-size="4.8" textLength="151.0" lengthAdjust="spacingAndGlyphs" fill="#333" stroke="#333" stroke-width="0.1">+ check_inserted_iside_error_e : uvm_event #(uvm_pkg::uvm_object)</text><text x="14" y="40.400000000000034" font-family="Liberation Mono" font-size="4.8" textLength="55.8" lengthAdjust="spacingAndGlyphs" fill="#333" stroke="#333" stroke-width="0.1">+ cosim_handle : chandle</text><text x="14" y="46.30000000000001" font-family="Liberation Mono" font-size="4.8" textLength="186.0" lengthAdjust="spacingAndGlyphs" fill="#333" stroke="#333" stroke-width="0.1">+ dmem_port : uvm_tlm_analysis_fifo #(ibex_mem_intf_pkg::ibex_mem_intf_seq_item)</text><text x="14" y="52.30000000000001" font-family="Liberation Mono" font-size="4.8" textLength="97.7" lengthAdjust="spacingAndGlyphs" fill="#333" stroke="#333" stroke-width="0.1">+ dut_vif : virtual core_ibex_dut_probe_if</text><text x="14" y="58.10000000000002" font-family="Liberation Mono" font-size="4.8" textLength="97.7" lengthAdjust="spacingAndGlyphs" fill="#333" stroke="#333" stroke-width="0.1">+ failed_iside_accesses[cosim_item_] : bit</text><text x="14" y="63.80000000000001" font-family="Liberation Mono" font-size="4.8" textLength="211.9" lengthAdjust="spacingAndGlyphs" fill="#333" stroke="#333" stroke-width="0.1">+ ifetch_pmp_port : uvm_tlm_analysis_fifo #(ibex_cosim_agent_pkg::ibex_ifetch_pmp_seq_item)</text><text x="14" y="69.80000000000001" font-family="Liberation Mono" font-size="4.8" textLength="193.0" lengthAdjust="spacingAndGlyphs" fill="#333" stroke="#333" stroke-width="0.1">+ ifetch_port : uvm_tlm_analysis_fifo #(ibex_cosim_agent_pkg::ibex_ifetch_seq_item)</text><text x="14" y="74.80000000000001" font-family="Liberation Mono" font-size="4.8" textLength="186.0" lengthAdjust="spacingAndGlyphs" fill="#333" stroke="#333" stroke-width="0.1">+ imem_port : uvm_tlm_analysis_fifo #(ibex_mem_intf_pkg::ibex_mem_intf_seq_item)</text><text x="14" y="80.80000000000001" font-family="Liberation Mono" font-size="4.8" textLength="111.5" lengthAdjust="spacingAndGlyphs" fill="#333" stroke="#333" stroke-width="0.1">+ instr_vif : virtual core_ibex_instr_monitor_if</text><text x="14" y="87.40000000000003" font-family="Liberation Mono" font-size="4.8" textLength="88.0" lengthAdjust="spacingAndGlyphs" fill="#333" stroke="#333" stroke-width="0.1">+ iside_error_queue[isa] : iside_err_t</text><text x="14" y="93.10000000000002" font-family="Liberation Mono" font-size="4.8" textLength="88.0" lengthAdjust="spacingAndGlyphs" fill="#333" stroke="#333" stroke-width="0.1">+ iside_pmp_failure[n_cosim_inw] : bit</text><text x="14" y="99.10000000000002" font-family="Liberation Mono" font-size="4.8" textLength="102.0" lengthAdjust="spacingAndGlyphs" fill="#333" stroke="#333" stroke-width="0.1">+ reset_e : uvm_event #(uvm_pkg::uvm_object)</text><text x="14" y="105.19999999999999" font-family="Liberation Mono" font-size="4.8" textLength="184.0" lengthAdjust="spacingAndGlyphs" fill="#333" stroke="#333" stroke-width="0.1">+ rvfi_port : uvm_tlm_analysis_fifo #(ibex_cosim_agent_pkg::ibex_rvfi_seq_item)</text><text x="14" y="110.19999999999999" font-family="Liberation Mono" font-size="4.8" textLength="46.0" lengthAdjust="spacingAndGlyphs" fill="#333" stroke="#333" stroke-width="0.1">+ type_name : string</text><text x="14" y="118.60000000000002" font-family="Liberation Mono" font-size="4.8" textLength="49.0" lengthAdjust="spacingAndGlyphs" fill="#333" stroke="#333" stroke-width="0.1">+ build_phase(): void</text><text x="14" y="124.40000000000003" font-family="Liberation Mono" font-size="4.8" textLength="49.0" lengthAdjust="spacingAndGlyphs" fill="#333" stroke="#333" stroke-width="0.1">+ final_phase(): void</text><text x="14" y="129.8" font-family="Liberation Mono" font-size="4.8" textLength="71.8" lengthAdjust="spacingAndGlyphs" fill="#333" stroke="#333" stroke-width="0.1">+ get_cosim_error_str(): string</text><text x="14" y="135.69999999999993" font-family="Liberation Mono" font-size="4.8" textLength="90.7" lengthAdjust="spacingAndGlyphs" fill="#333" stroke="#333" stroke-width="0.1">+ get_object_type(): uvm_object_wrapper</text><text x="14" y="141.5" font-family="Liberation Mono" font-size="4.8" textLength="49.0" lengthAdjust="spacingAndGlyphs" fill="#333" stroke="#333" stroke-width="0.1">+ get_type(): type_id</text><text x="14" y="147.5" font-family="Liberation Mono" font-size="4.8" textLength="57.9" lengthAdjust="spacingAndGlyphs" fill="#333" stroke="#333" stroke-width="0.1">+ get_type_name(): string</text><text x="14" y="153.5" font-family="Liberation Mono" font-size="4.8" textLength="37.0" lengthAdjust="spacingAndGlyphs" fill="#333" stroke="#333" stroke-width="0.1">+ handle_reset()</text><text x="14" y="159.5" font-family="Liberation Mono" font-size="4.8" textLength="44.0" lengthAdjust="spacingAndGlyphs" fill="#333" stroke="#333" stroke-width="0.1">+ pre_abort(): void</text><text x="14" y="164.79999999999995" font-family="Liberation Mono" font-size="4.8" textLength="42.0" lengthAdjust="spacingAndGlyphs" fill="#333" stroke="#333" stroke-width="0.1">+ run_cosim_dmem()</text><text x="14" y="170.5999999999999" font-family="Liberation Mono" font-size="4.8" textLength="46.0" lengthAdjust="spacingAndGlyphs" fill="#333" stroke="#333" stroke-width="0.1">+ run_cosim_ifetch()</text><text x="14" y="176.29999999999995" font-family="Liberation Mono" font-size="4.8" textLength="56.0" lengthAdjust="spacingAndGlyphs" fill="#333" stroke="#333" stroke-width="0.1">+ run_cosim_ifetch_pmp()</text><text x="14" y="182.29999999999995" font-family="Liberation Mono" font-size="4.8" textLength="42.0" lengthAdjust="spacingAndGlyphs" fill="#333" stroke="#333" stroke-width="0.1">+ run_cosim_imem()</text><text x="14" y="187.79999999999995" font-family="Liberation Mono" font-size="4.8" textLength="58.0" lengthAdjust="spacingAndGlyphs" fill="#333" stroke="#333" stroke-width="0.1">+ run_cosim_imem_errors()</text><text x="14" y="193.39999999999998" font-family="Liberation Mono" font-size="4.8" textLength="72.0" lengthAdjust="spacingAndGlyphs" fill="#333" stroke="#333" stroke-width="0.1">+ run_cosim_prune_imem_errors()</text><text x="14" y="199.39999999999998" font-family="Liberation Mono" font-size="4.8" textLength="42.0" lengthAdjust="spacingAndGlyphs" fill="#333" stroke="#333" stroke-width="0.1">+ run_cosim_rvfi()</text><text x="14" y="205.19999999999993" font-family="Liberation Mono" font-size="4.8" textLength="30.0" lengthAdjust="spacingAndGlyphs" fill="#333" stroke="#333" stroke-width="0.1">+ run_phase()</text><path d="M232.0 34.3 L407.8 34.3" stroke="#8a8a8a" stroke-width="1" stroke-dasharray="5,3" fill="none"/><path d="M232.0 56.0 L237.0 56.0 L237.0 45.0 L396.0 45.0 L396.0 36.0" stroke="#8a8a8a" stroke-width="1" stroke-dasharray="5,3" fill="none"/><path d="M232.0 77.4 L243.5 77.4 L243.5 56.0 L407.8 56.0" stroke="#8a8a8a" stroke-width="1" stroke-dasharray="5,3" fill="none"/><path d="M232.0 99.0 L249.0 99.0 L249.0 67.0 L402.0 67.0 L402.0 87.0" stroke="#8a8a8a" stroke-width="1" stroke-dasharray="5,3" fill="none"/><path d="M232.0 120.7 L255.0 120.7 L255.0 77.7 L396.0 77.7 L396.0 87.0" stroke="#8a8a8a" stroke-width="1" stroke-dasharray="5,3" fill="none"/><path d="M232.0 142.0 L261.0 142.0 L261.0 88.7 L407.8 88.7" stroke="#8a8a8a" stroke-width="1" stroke-dasharray="5,3" fill="none"/><path d="M232.0 163.0 L266.6 163.0 L266.6 99.0 L396.0 99.0 L396.0 90.0" stroke="#8a8a8a" stroke-width="1" stroke-dasharray="5,3" fill="none"/><path d="M232.0 185.3 L272.3 185.3 L272.3 110.0 L402.0 110.0 L402.0 90.0" stroke="#8a8a8a" stroke-width="1" stroke-dasharray="5,3" fill="none"/><path d="M402 31.80000000000001 L407.79999999999995 34.30000000000001 L402 36.80000000000001" fill="none" stroke="#555" stroke-width="1"/><path d="M402 53.5 L407.79999999999995 56 L402 58.5" fill="none" stroke="#555" stroke-width="1"/><path d="M402 86.19999999999999 L407.79999999999995 88.69999999999999 L402 91.19999999999999" fill="none" stroke="#555" stroke-width="1"/><rect x="406.5" y="84" width="2" height="9" fill="#222"/><rect x="406.5" y="31.5" width="1.5" height="6" fill="#444"/><text x="334.5999999999999" y="31" font-family="Liberation Mono" font-size="6" text-anchor="middle" fill="#333">reset_e</text><text x="334.5999999999999" y="41.80000000000001" font-family="Liberation Mono" font-size="6" text-anchor="middle" fill="#333">check_inserted_iside_error_e</text><text x="334.5999999999999" y="52" font-family="Liberation Mono" font-size="6" text-anchor="middle" fill="#333">cfg</text><text x="334.5999999999999" y="63" font-family="Liberation Mono" font-size="6" text-anchor="middle" fill="#333">ifetch_port</text><text x="334.5999999999999" y="74" font-family="Liberation Mono" font-size="6" text-anchor="middle" fill="#333">imem_port</text><text x="334.5999999999999" y="85" font-family="Liberation Mono" font-size="6" text-anchor="middle" fill="#333">dmem_port</text><text x="334.5999999999999" y="96" font-family="Liberation Mono" font-size="6" text-anchor="middle" fill="#333">ifetch_pmp_port</text><text x="334.5999999999999" y="105.80000000000001" font-family="Liberation Mono" font-size="6" text-anchor="middle" fill="#333">rvfi_port</text><rect x="407.79999999999995" y="31" width="103.20000000000005" height="10" fill="#fff" stroke="#7f7f7f" stroke-width="1"/><text x="417.0" y="38.80000000000001" font-family="Liberation Mono" font-weight="bold" font-size="7.4" textLength="84.8" lengthAdjust="spacingAndGlyphs" fill="#111">uvm_pkg::uvm_event &lt;T&gt;</text><rect x="407.79999999999995" y="50.80000000000001" width="177.20000000000005" height="10.399999999999977" fill="#fff" stroke="#7f7f7f" stroke-width="1"/><text x="417.0" y="58.60000000000002" font-family="Liberation Mono" font-weight="bold" font-size="7.4" textLength="158.8" lengthAdjust="spacingAndGlyphs" fill="#111">ibex_cosim_agent_pkg::core_ibex_cosim_cfg</text><rect x="407.79999999999995" y="83" width="149.5" height="10.399999999999977" fill="#fff" stroke="#7f7f7f" stroke-width="1"/><text x="417.0" y="90.80000000000001" font-family="Liberation Mono" font-weight="bold" font-size="7.4" textLength="131.1" lengthAdjust="spacingAndGlyphs" fill="#111">uvm_pkg::uvm_tlm_analysis_fifo &lt;T&gt;</text></svg>
<div class="a" style="left:1479px;top:391px;width:22.5px;height:24.5px;border-radius:5px;border:1px solid #ececec;background:#f9fafb"></div>
<svg class="a" style="left:1479px;top:391px" width="23" height="25"><g stroke="#c3c6c9" stroke-width="1.7" fill="none"><path d="M6 7 L17 18.5 M17 7 L6 18.5"/></g><g fill="#c3c6c9"><path d="M4.3 4.9 H9.8 L4.3 10.4 Z"/><path d="M18.7 4.9 H13.2 L18.7 10.4 Z"/><path d="M4.3 20.5 H9.8 L4.3 15 Z"/><path d="M18.7 20.5 H13.2 L18.7 15 Z"/></g></svg>
<div class="a cap" style="left:1040px;top:593px;font-size:12.5px">Collaboration Diagram of ibex_cosim_scoreboard</div>
<div class="a h2" style="left:874px;top:646px">Overview</div>
<div class="a para" style="left:874px;top:696.0px;letter-spacing:0.126px">This UVM scoreboard performs <b>co-simulation verification</b> for the Ibex RISC-V core by</div>
<div class="a para" style="left:874px;top:720.1px;letter-spacing:0.077px">comparing RTL execution against a reference ISS model (Spike). It extends</div>
<div class="a para" style="left:874px;top:744.3px;letter-spacing:0.294px"><span class="code">uvm_scoreboard</span> <span>and receives transaction streams from multiple monitors via TLM</span></div>
<div class="a para" style="left:874px;top:768.5px;letter-spacing:0.161px">analysis FIFOs, including retired instructions (RVFI), data memory accesses, instruction</div>
<div class="a para" style="left:874px;top:792.6px;letter-spacing:0.180px">memory accesses, instruction fetch operations, and PMP checks. The scoreboard invokes</div>
<div class="a para" style="left:874px;top:816.8px;letter-spacing:0.171px">DPI functions to synchronize the Spike ISS with RTL state (interrupts, CSRs, debug</div>
<div class="a para" style="left:874px;top:840.9px;letter-spacing:0.252px">requests) and validates that each retired instruction matches the reference model's</div>
<div class="a para" style="left:874px;top:865.0px;letter-spacing:0.262px">behavior.</div>
<div class="a" style="left:874px;top:913px;width:625px;height:1px;background:#1aab9b"></div>
<div class="a" style="left:0;top:914px;width:1530px;height:1px;background:#8a8a8a"></div>
<div class="a" style="left:0;top:0;width:1px;height:915px;background:#8a8a8a"></div>
</body></html>
